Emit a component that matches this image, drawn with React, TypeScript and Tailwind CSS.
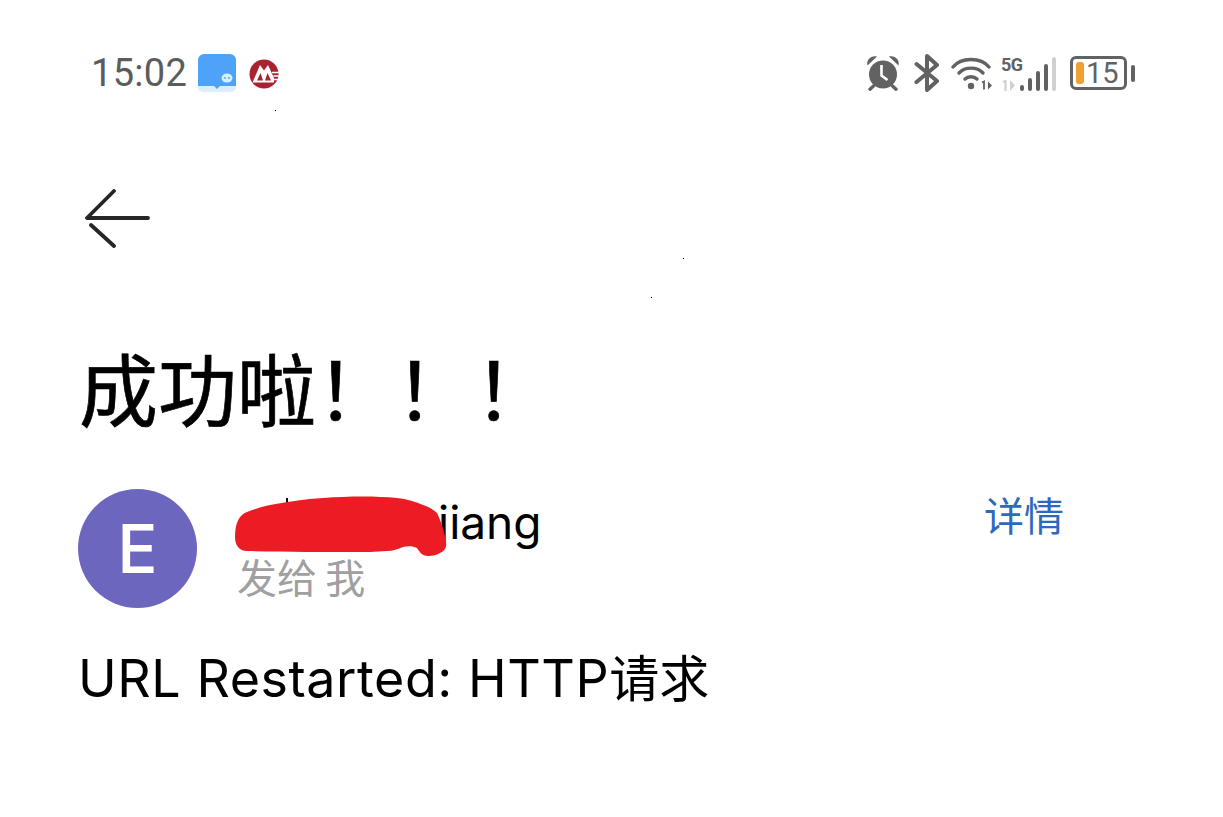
const cjk = "font-['Inter','Noto_Sans_CJK_SC',sans-serif]";

function ChatNoteIcon() {
  return (
    <svg width="38" height="38" viewBox="0 0 38 38">
      <path d="M0 6a6 6 0 0 1 6-6h26a6 6 0 0 1 6 6v26H0z" fill="#4da3f7" />
      <path d="M0 32h38v1a5 5 0 0 1-5 5H5a5 5 0 0 1-5-5z" fill="#dcedfb" />
      <path d="M16 32h6l-3 3z" fill="#4da3f7" />
      <ellipse cx="29" cy="24" rx="5.5" ry="4.6" fill="#d9eefc" />
      <circle cx="27" cy="24" r="0.9" fill="#4da3f7" />
      <circle cx="31" cy="24" r="0.9" fill="#4da3f7" />
    </svg>
  );
}

function BankIcon() {
  return (
    <svg width="30" height="30" viewBox="0 0 30 30">
      <circle cx="15" cy="15" r="14.5" fill="#a8232f" />
      <path d="M3.5 23.5 L11 6 L15 11.5 L19 6 L25 19 V23.5 Z" fill="#fff" />
      <path d="M8 21.5 L11.5 14 L14 21.5 Z M16 21.5 L18.5 14 L22 21.5 Z" fill="#a8232f" />
      <path d="M23 13.5h6.5M24.5 17h5M25 20.5h4" stroke="#fff" strokeWidth="1.4" />
    </svg>
  );
}

function AlarmIcon() {
  return (
    <svg width="34" height="36" viewBox="0 0 34 36">
      <circle cx="17" cy="19.5" r="14" fill="#626262" />
      <path d="M1.5 10.5 C0 5 5 0 11 1.5 Z M32.5 10.5 C34 5 29 0 23 1.5 Z" fill="#626262" />
      <path d="M7.5 31l-3.5 3.2M26.5 31l3.5 3.2" stroke="#626262" strokeWidth="3.4" strokeLinecap="round" />
      <path d="M15.5 10v10.5l6 4.5" fill="none" stroke="#fff" strokeWidth="2.6" />
    </svg>
  );
}

function BluetoothIcon() {
  return (
    <svg width="26" height="38" viewBox="0 0 26 38">
      <path
        d="M2.5 10 L23 27 L13 36 V2 L23 11 L2.5 28"
        fill="none"
        stroke="#626262"
        strokeWidth="4"
        strokeLinecap="round"
        strokeLinejoin="round"
      />
    </svg>
  );
}

function WifiIcon() {
  return (
    <svg width="42" height="34" viewBox="0 0 42 34">
      <path d="M2 11 C10 1 30 1 38 11" fill="none" stroke="#626262" strokeWidth="3.4" strokeLinecap="round" />
      <path d="M8 17 C14 10.5 26 10.5 32 17" fill="none" stroke="#626262" strokeWidth="3.4" strokeLinecap="round" />
      <path d="M14 23 C17 20 23 20 26 23" fill="none" stroke="#626262" strokeWidth="3.4" strokeLinecap="round" />
      <circle cx="20" cy="30" r="3.2" fill="#626262" />
      <path d="M31 26.5l2-1v8" fill="none" stroke="#626262" strokeWidth="1.8" />
      <path d="M37 25.5v8l4-4z" fill="#626262" />
    </svg>
  );
}

function SimOneIcon() {
  return (
    <svg width="15" height="11" viewBox="0 0 15 11">
      <path d="M2 2l2.5-1v10" fill="none" stroke="#d0d0d0" strokeWidth="2.2" />
      <path d="M9 0v11l5-5.5z" fill="#d0d0d0" />
    </svg>
  );
}

function SignalIcon() {
  const bars = [
    { h: 6, color: "bg-[#626262]" },
    { h: 13, color: "bg-[#626262]" },
    { h: 20, color: "bg-[#626262]" },
    { h: 27, color: "bg-[#626262]" },
    { h: 34, color: "bg-[#d0d0d0]" },
  ];
  return (
    <div className="flex items-end gap-[3.5px]">
      {bars.map((b, i) => (
        <div key={i} className={`w-[4.5px] rounded-full ${b.color}`} style={{ height: b.h }} />
      ))}
    </div>
  );
}

function Redaction() {
  return (
    <svg className="absolute left-[-203px] top-0" width="214" height="64" viewBox="0 0 214 64">
      <rect x="51" y="3" width="2" height="8" fill="#111" />
      <path
        d="M0 42C0 28 4 20 12 17 20 14 26 12 35 10 52 7 70 4 88 3c26-2 54-2 74 0 10 1 19 4 26 7 6 2 11 5 14 8 4 8 8 20 9 29 1 5-1 9-6 11-3 2-7 3-12 3-5 0-8-3-11-8-4-2-9-2-14-1-5 2-10 4-16 4-12 1-22 1-34 1-30 0-70 0-106-1C4 56 0 50 0 42z"
        fill="#ed1c24"
      />
    </svg>
  );
}

export default function App() {
  return (
    <div className={`relative h-[817px] w-[1223px] overflow-hidden bg-white text-black ${cjk}`}>
      <div className="flex h-[110px] items-start justify-between pl-[91px] pr-[88px] pt-[54px]">
        <div className="flex items-center">
          <span className="font-['Roboto'] text-[38px] leading-[36px] tracking-[0.3px] text-[#5c5c5c]">15:02</span>
          <div className="ml-[11px]">
            <ChatNoteIcon />
          </div>
          <div className="ml-[13px] mt-[1px]">
            <BankIcon />
          </div>
        </div>
        <div className="flex items-center">
          <AlarmIcon />
          <div className="ml-[14px]">
            <BluetoothIcon />
          </div>
          <div className="ml-[11px]">
            <WifiIcon />
          </div>
          <div className="relative ml-[8px] flex h-[35px] w-[55px] items-end justify-end">
            <span className="absolute left-0 top-0 font-['Roboto'] text-[18px] font-bold leading-[17px] tracking-[-0.5px] text-[#626262]">5G</span>
            <span className="absolute bottom-0 left-0 flex">
              <SimOneIcon />
            </span>
            <SignalIcon />
          </div>
          <div className="ml-[14px] flex items-center">
            <div className="flex h-[34px] w-[57px] items-center rounded-[6px] border-[3px] border-[#626262] pl-[3px]">
              <div className="h-[22px] w-2 rounded-[3px] bg-[#f0a030]" />
              <span className="ml-[2px] font-['Roboto'] text-[29px] leading-[29px] text-[#626262]">15</span>
            </div>
            <div className="ml-[4px] h-[17px] w-1 rounded-full bg-[#626262]" />
          </div>
        </div>
      </div>

      <div className="pl-[85px] pt-[79px]">
        <svg width="66" height="60" viewBox="0 0 66 60" className="block">
          <path
            d="M29 2 L2 29 H63 M6 36 L29 57"
            fill="none"
            stroke="#262626"
            strokeWidth="3.8"
            strokeLinecap="round"
            strokeLinejoin="round"
          />
        </svg>
      </div>

      <h1 className="pl-[79px] pt-[98px] text-[79px] font-normal leading-[90px] [-webkit-text-stroke:0.7px_black]">
        成功啦{"\uFF01\uFF01\uFF01"}
      </h1>

      <div className="flex items-start pl-[78px] pr-[159px] pt-[52px]">
        <div className="flex h-[119px] w-[119px] shrink-0 items-center justify-center rounded-full bg-[#6c66bf] text-[67px] font-medium leading-none text-white">
          E
        </div>
        <div className="ml-[41px] flex-1">
          <div className="pl-[200px] pt-[6px] text-[46px] leading-[54px]">
            <span className="relative inline-block">
              <Redaction />
              jiang
            </span>
          </div>
          <div className="-ml-[1px] pt-[8px] text-[40px] leading-[44px] text-[#a0a0a0] [word-spacing:-3px]">发给 我</div>
        </div>
        <a className="pt-[4px] text-[40px] leading-[48px] text-[#2f69bd]">详情</a>
      </div>

      <p className="pl-[78px] pt-[36px] text-[52px] leading-[70px] tracking-[0.55px]">
        URL Restarted: HTTP<span className="text-[50px] tracking-normal">请求</span>
      </p>

      <span className="absolute left-[275px] top-[110px] h-px w-px bg-black" />
      <span className="absolute left-[683px] top-[258px] h-px w-px bg-black" />
      <span className="absolute left-[651px] top-[297px] h-px w-px bg-black" />
    </div>
  );
}
